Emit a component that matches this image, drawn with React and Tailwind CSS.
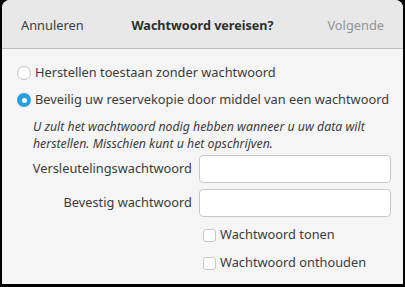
export default function App() {
  const font = { fontFamily: '"Noto Sans", "Open Sans", sans-serif' };
  return (
    <div className="w-[405px] h-[287px] bg-black overflow-hidden" style={font}>
      <div className="ml-[2px] mr-[2px] h-[284px] rounded-t-[8px] overflow-hidden bg-[#f5f5f5] flex flex-col">
        <div className="h-[49px] shrink-0 bg-[#e8e8e8] border-b border-[#bfbfbf] grid grid-cols-[1fr_auto_1fr] items-center pl-[19px] pr-[19px] pt-[4px] text-[12.8px]">
          <span className="text-[#3c3c3c] justify-self-start">Annuleren</span>
          <span className="font-bold text-[#2e2e2e] text-[12.6px]">Wachtwoord vereisen?</span>
          <span className="text-[#939393] justify-self-end">Volgende</span>
        </div>
        <div className="flex flex-col pl-[15px] text-[12.8px] text-[#3c3c3c]">
          <div className="mt-[14px] h-[20px] flex items-center gap-[4px]">
            <span className="w-[14px] h-[14px] rounded-full bg-white border border-[#c4c4c4] shrink-0" />
            <span>Herstellen toestaan zonder wachtwoord</span>
          </div>
          <div className="mt-[7px] h-[20px] flex items-center gap-[4px]">
            <span className="w-[14px] h-[14px] rounded-full bg-[#2a9fe0] shrink-0 flex items-center justify-center">
              <span className="w-[5px] h-[5px] rounded-full bg-white" />
            </span>
            <span>Beveilig uw reservekopie door middel van een wachtwoord</span>
          </div>
          <p className="mt-[8px] ml-[16px] italic text-[12.3px] leading-[17px] text-[#3c3c3c]">
            U zult het wachtwoord nodig hebben wanneer u uw data wilt
            <br />
            herstellen. Misschien kunt u het opschrijven.
          </p>
          <div className="mt-[3px] grid grid-cols-[175px_192px] gap-x-[7px] gap-y-[6px] items-center">
            <span className="text-right">Versleutelingswachtwoord</span>
            <div className="h-[28px] rounded-[4px] border border-[#c8c8c8] bg-white" />
            <span className="text-right">Bevestig wachtwoord</span>
            <div className="h-[28px] rounded-[4px] border border-[#c8c8c8] bg-white" />
          </div>
          <div className="ml-[186px] mt-[10px] h-[16px] flex items-center gap-[4px]">
            <span className="w-[13px] h-[13px] rounded-[3px] bg-white border border-[#c8c8c8] shrink-0" />
            <span>Wachtwoord tonen</span>
          </div>
          <div className="ml-[186px] mt-[12px] h-[16px] flex items-center gap-[4px]">
            <span className="w-[13px] h-[13px] rounded-[3px] bg-white border border-[#c8c8c8] shrink-0" />
            <span>Wachtwoord onthouden</span>
          </div>
        </div>
      </div>
    </div>
  );
}
